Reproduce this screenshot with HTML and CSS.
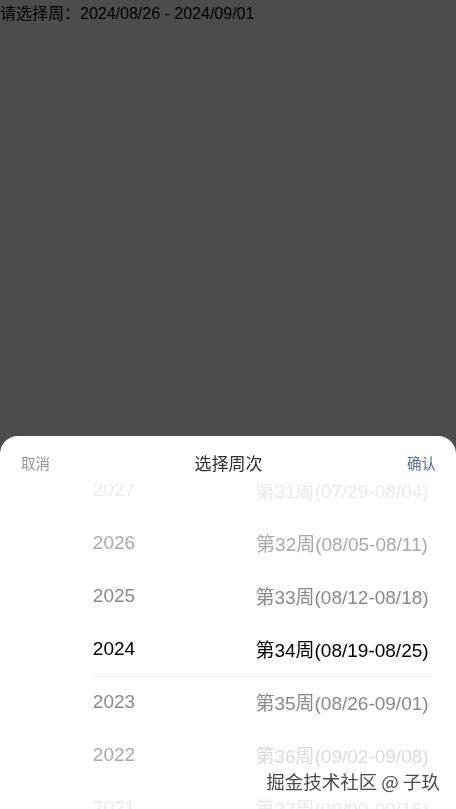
FILE: index.html
```html
<!DOCTYPE html>
<html lang="zh-CN">
<head>
    <meta charset="UTF-8">
    <meta name="viewport" content="width=device-width, initial-scale=1.0">
    <title>选择周次</title>
    <link rel="stylesheet" href="styles.css">
</head>
<body>
<div class="week-text">请选择周：2024/08/26 - 2024/09/01</div>

<!-- 遮罩层 -->
<div class="overlay"></div>

<!-- 底部弹出的周选择器 -->
<div class="popup">
    <div class="toolbar">
        <span class="btn-cancel">取消</span>
        <span class="title">选择周次</span>
        <span class="btn-confirm">确认</span>
    </div>
    <div class="columns">
        <ul class="column">
            <li class="item far">2027</li>
            <li class="item mid">2026</li>
            <li class="item near">2025</li>
            <li class="item active">2024</li>
            <li class="item near">2023</li>
            <li class="item mid">2022</li>
            <li class="item far">2021</li>
        </ul>
        <ul class="column">
            <li class="item far">第31周(07/29-08/04)</li>
            <li class="item mid">第32周(08/05-08/11)</li>
            <li class="item near">第33周(08/12-08/18)</li>
            <li class="item active">第34周(08/19-08/25)</li>
            <li class="item near">第35周(08/26-09/01)</li>
            <li class="item faint">第36周(09/02-09/08)</li>
            <li class="item far">第37周(09/09-09/15)</li>
        </ul>
        <div class="frame"></div>
    </div>
</div>

<div class="watermark">掘金技术社区 @ 子玖</div>
</body>
</html>
```

FILE: styles.css
```css
body{
    margin: 0;
    height: 809px;
    overflow: hidden;
    font-family: "Liberation Sans", "Noto Sans CJK SC", sans-serif;
    background: #fff;
}

.week-text{
    padding-top: 5px;
    font-size: 16px;
    line-height: 18px;
    color: #000;
}

.overlay{
    position: fixed;
    top: 0;
    left: 0;
    right: 0;
    bottom: 0;
    background: rgba(0, 0, 0, 0.7);
}

.popup{
    position: fixed;
    left: 0;
    right: 0;
    bottom: 0;
    height: 373px;
    background: #fff;
    border-radius: 18px 18px 0 0;
    overflow: hidden;
}

.toolbar{
    box-sizing: border-box;
    height: 48px;
    padding: 4px 20px 0 21px;
    display: flex;
    align-items: center;
    justify-content: space-between;
}
.btn-cancel{
    font-size: 14.5px;
    color: #969799;
}
.title{
    font-size: 17px;
    color: #323233;
}
.btn-confirm{
    font-size: 14.5px;
    color: #576b95;
}

.columns{
    position: relative;
    display: flex;
    height: 325px;
    overflow: hidden;
}
.column{
    flex: 1;
    margin: 0;
    padding: 0;
    list-style: none;
    transform: translateY(-21px);
}
.item{
    height: 53px;
    display: flex;
    align-items: center;
    justify-content: center;
    font-size: 19px;
    white-space: nowrap;
}
.active{ color: #000; }
.near{ color: #8a8a8a; }
.mid{ color: #aaa; }
.faint{ color: #dcdcdc; }
.far{ color: #ebebeb; }

/* 选中行下方的细线 */
.frame{
    position: absolute;
    left: 93px;
    right: 24px;
    top: 139px;
    height: 53px;
    border-bottom: 1px solid #f3f3f3;
    pointer-events: none;
}

.watermark{
    position: fixed;
    right: 16px;
    bottom: 15px;
    font-family: "Noto Sans CJK SC", sans-serif;
    font-size: 18.5px;
    color: #4a4a4a;
    text-shadow: 0 0 2px #fff, 0 0 2px #fff;
}
```
